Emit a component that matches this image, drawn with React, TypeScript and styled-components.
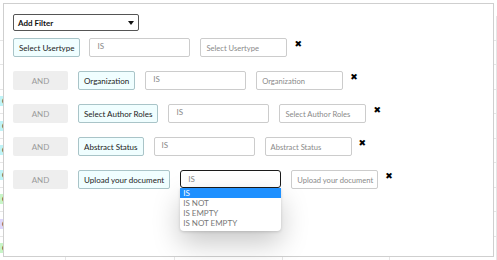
import React from "react";
import styled, { createGlobalStyle } from "styled-components";

const Global = createGlobalStyle`
  html, body { margin: 0; padding: 0; background: #fff; }
  body { font-family: Lato, "Open Sans", "DejaVu Sans", sans-serif; }
  * { box-sizing: border-box; }
`;

const Page = styled.div`
  position: relative;
  width: 497px;
  height: 260px;
  overflow: hidden;
  background: #fff;
`;

const BgTable = styled.div`
  display: flex;
  flex-direction: column;
  padding-top: 16px;
`;

const BgRow = styled.div`
  display: grid;
  grid-template-columns: 66px 109px 108px 107px 107px;
  height: 24.5px;
  border-bottom: 1px solid #e6e6e6;
`;

const BgCell = styled.div<{ $tint?: string }>`
  border-right: 1px solid #e6e6e6;
  font-size: 8px;
  color: #333;
  display: flex;
  align-items: center;
  & > span {
    background: ${(p) => p.$tint || "transparent"};
    padding: 0 2px;
    line-height: 10px;
  }
`;

const Modal = styled.div`
  position: absolute;
  left: 3px;
  top: 3px;
  width: 491px;
  height: 254px;
  background: #fff;
  border: 1px solid #cfcfcf;
  padding: 10px 9px;
  display: flex;
  flex-direction: column;
  gap: 7px;
`;

const AddFilter = styled.div`
  width: 126px;
  height: 17px;
  border: 1px solid #555;
  border-radius: 2px;
  display: flex;
  align-items: center;
  justify-content: space-between;
  padding: 0 4px 0 4px;
  font-size: 8px;
  font-weight: 700;
  color: #111;
`;

const Caret = styled.span`
  width: 0;
  height: 0;
  border-left: 3.5px solid transparent;
  border-right: 3.5px solid transparent;
  border-top: 4px solid #111;
`;

const Rows = styled.div`
  display: flex;
  flex-direction: column;
  gap: 14px;
`;

const Row = styled.div<{ $tight?: boolean }>`
  display: flex;
  align-items: flex-start;
  gap: 10px;
  height: 19px;
  & > :first-child {
    margin-right: ${(p) => (p.$tight ? "-1px" : "0")};
  }
`;

const AndBox = styled.div`
  width: 55px;
  height: 19px;
  background: #eeeeee;
  border-radius: 2px;
  color: #9a9a9a;
  font-size: 8px;
  display: flex;
  align-items: center;
  justify-content: center;
`;

const FieldButton = styled.div`
  height: 19px;
  padding: 0 5px;
  background: #f0feff;
  border: 1px solid #a9c4c8;
  border-radius: 2px;
  color: #222;
  font-size: 8px;
  display: flex;
  align-items: center;
  white-space: nowrap;
`;

const OpWrap = styled.div`
  position: relative;
  width: 101px;
`;

const OpInput = styled.div<{ $focused?: boolean }>`
  width: 101px;
  height: ${(p) => (p.$focused ? "18px" : "19px")};
  border: ${(p) => (p.$focused ? "1.5px solid #1a1a1a" : "1px solid #cccccc")};
  border-radius: ${(p) => (p.$focused ? "3px" : "2px")};
  padding-left: 7px;
  color: #888;
  font-size: 8px;
  display: flex;
  align-items: ${(p) => (p.$focused ? "center" : "flex-start")};
  padding-top: ${(p) => (p.$focused ? "0" : "2px")};
`;

const ValueInput = styled.div`
  width: 87px;
  height: 19px;
  border: 1px solid #cccccc;
  border-radius: 2px;
  padding-left: 5px;
  color: #8a8a8a;
  font-size: 7.6px;
  display: flex;
  align-items: center;
  white-space: nowrap;
  overflow: hidden;
`;

const Remove = styled.span`
  font-family: "DejaVu Sans", sans-serif;
  font-size: 9px;
  line-height: 9px;
  color: #000;
  margin-top: 2px;
  margin-left: -3px;
`;

const DropList = styled.div`
  position: absolute;
  left: 0;
  top: 18px;
  width: 101px;
  background: #fff;
  border-radius: 0 0 4px 4px;
  box-shadow: 0 12px 28px rgba(0, 0, 0, 0.22), 0 1px 3px rgba(0, 0, 0, 0.15);
  padding-bottom: 3px;
  z-index: 2;
`;

const Option = styled.div<{ $active?: boolean }>`
  height: 10px;
  line-height: 10px;
  padding-left: 3px;
  font-size: 8px;
  color: ${(p) => (p.$active ? "#fff" : "#777")};
  background: ${(p) => (p.$active ? "#1e90ff" : "transparent")};
`;

type Filter = { and: boolean; field: string; placeholder: string; open?: boolean };

const filters: Filter[] = [
  { and: false, field: "Select Usertype", placeholder: "Select Usertype" },
  { and: true, field: "Organization", placeholder: "Organization" },
  { and: true, field: "Select Author Roles", placeholder: "Select Author Roles" },
  { and: true, field: "Abstract Status", placeholder: "Abstract Status" },
  { and: true, field: "Upload your document", placeholder: "Upload your document", open: true },
];

const options = ["IS", "IS NOT", "IS EMPTY", "IS NOT EMPTY"];

const tints = ["", "", "", "#bff3f7", "#bff3f7", "#bff3f7", "#bff3f7", "#c8f5c8", "#ddd6fb", "#c8f5c8"];

export default function App() {
  return (
    <Page>
      <Global />
      <BgTable>
        {tints.map((t, i) => (
          <BgRow key={i}>
            <BgCell $tint={t || undefined}>
              <span>{t ? "Co" : ""}</span>
            </BgCell>
            <BgCell />
            <BgCell />
            <BgCell />
            <BgCell />
          </BgRow>
        ))}
      </BgTable>
      <Modal>
        <AddFilter>
          <span>Add Filter</span>
          <Caret />
        </AddFilter>
        <Rows>
          {filters.map((f, i) => (
            <Row key={i} $tight={!f.and}>
              {f.and && <AndBox>AND</AndBox>}
              <FieldButton>{f.field}</FieldButton>
              <OpWrap>
                <OpInput $focused={f.open}>IS</OpInput>
                {f.open && (
                  <DropList>
                    {options.map((o, j) => (
                      <Option key={o} $active={j === 0}>
                        {o}
                      </Option>
                    ))}
                  </DropList>
                )}
              </OpWrap>
              <ValueInput>{f.placeholder}</ValueInput>
              <Remove>✖</Remove>
            </Row>
          ))}
        </Rows>
      </Modal>
    </Page>
  );
}
